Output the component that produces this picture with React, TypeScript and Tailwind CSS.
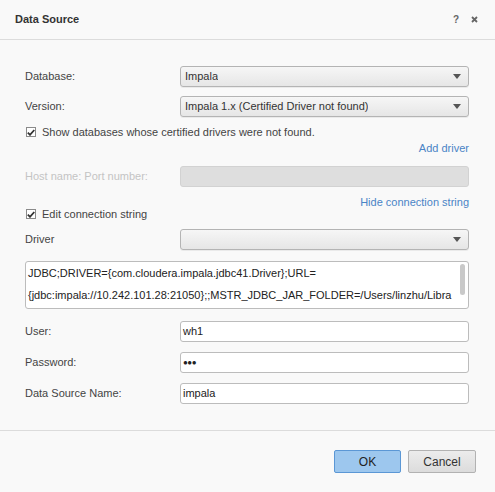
import React from "react";

const FONT = "font-['Liberation_Sans',Arial,sans-serif]";

function Caret() {
  return (
    <svg width="8" height="5" viewBox="0 0 8 5" className="shrink-0">
      <path d="M0 0 H8 L4 5 Z" fill="#555" />
    </svg>
  );
}

function Select({ value }: { value: string }) {
  return (
    <div className="flex-1 h-[21px] flex items-center justify-between pl-[4px] pr-[7px] rounded-[3px] border border-[#b4b4b4] bg-gradient-to-b from-[#f6f6f6] to-[#e6e6e6] text-[#333] shadow-[0_1px_0_rgba(0,0,0,0.06)]">
      <span className="truncate">{value}</span>
      <Caret />
    </div>
  );
}

function TextInput({ value, disabled, small }: { value?: string; disabled?: boolean; small?: boolean }) {
  return (
    <div
      className={
        disabled
          ? "flex-1 h-[21px] rounded-[3px] border border-[#d2d2d2] bg-[#dedede]"
          : `flex-1 h-[21px] flex items-center px-[2px] rounded-[3px] border border-[#bcbcbc] bg-white text-[#222] ${small ? "text-[8px] tracking-[-0.5px]" : ""}`
      }
    >
      {value}
    </div>
  );
}

function Row({
  label,
  muted,
  children,
  className = "",
}: {
  label: string;
  muted?: boolean;
  children: React.ReactNode;
  className?: string;
}) {
  return (
    <div className={`flex items-center ${className}`}>
      <span className={`w-[155px] shrink-0 ${muted ? "text-[#c4c4c4]" : "text-[#444]"}`}>{label}</span>
      {children}
    </div>
  );
}

function Check({ label, className = "" }: { label: string; className?: string }) {
  return (
    <div className={`flex items-center gap-[6px] pl-[1px] ${className}`}>
      <span className="w-[10px] h-[10px] border border-[#8a8a8a] bg-white flex items-center justify-center">
        <svg width="8" height="7" viewBox="0 0 8 7">
          <path d="M0.8 3.6 L3 5.8 L7.3 1" stroke="#333" strokeWidth="1.8" fill="none" />
        </svg>
      </span>
      <span className="text-[#444]">{label}</span>
    </div>
  );
}

export default function App() {
  return (
    <div className={`w-[495px] h-[492px] bg-[#f9f9f9] flex flex-col text-[11px] ${FONT}`}>
      {/* header */}
      <div className="h-[40px] shrink-0 flex items-center justify-between pl-[15px] pr-[17px] border-b border-[#dcdcdc]">
        <span className="font-bold text-[11px] text-[#333]">Data Source</span>
        <div className="flex items-center gap-[12px] text-[#666] font-bold">
          <span className="text-[10px]">?</span>
          <svg width="7" height="7" viewBox="0 0 7 7">
            <path d="M1 1 L6 6 M6 1 L1 6" stroke="#666" strokeWidth="1.8" />
          </svg>
        </div>
      </div>

      {/* form */}
      <div className="flex-1 flex flex-col pl-[25px] pr-[26px] pt-[26px]">
        <Row label="Database:">
          <Select value="Impala" />
        </Row>
        <Row label="Version:" className="mt-[9px]">
          <Select value="Impala 1.x (Certified Driver not found)" />
        </Row>
        <Check label="Show databases whose certified drivers were not found." className="h-[16px] mt-[7px]" />
        <div className="h-[16px] flex items-center justify-end">
          <span className="text-[#4a84c6]">Add driver</span>
        </div>
        <Row label="Host name: Port number:" muted className="mt-[10px]">
          <TextInput disabled />
        </Row>
        <div className="h-[12px] mt-[9px] flex items-center justify-end">
          <span className="text-[#4a84c6]">Hide connection string</span>
        </div>
        <Check label="Edit connection string" className="h-[12px]" />
        <Row label="Driver" className="mt-[9px]">
          <Select value="" />
        </Row>
        <div className="mt-[11px] h-[48px] relative rounded-[3px] border border-[#bcbcbc] bg-white text-[#222] pl-[2px] leading-[22px] overflow-hidden">
          <div className="whitespace-nowrap">JDBC;DRIVER={"{com.cloudera.impala.jdbc41.Driver}"};URL=</div>
          <div className="whitespace-nowrap">{"{jdbc:impala://10.242.101.28:21050}"};;MSTR_JDBC_JAR_FOLDER=/Users/linzhu/Libra</div>
          <span className="absolute right-[3px] top-[2px] w-[5px] h-[31px] rounded-full bg-[#c9c9c9]" />
        </div>
        <Row label="User:" className="mt-[12px]">
          <TextInput value="wh1" />
        </Row>
        <Row label="Password:" className="mt-[10px]">
          <TextInput value="●●●" small />
        </Row>
        <Row label="Data Source Name:" className="mt-[10px]">
          <TextInput value="impala" />
        </Row>
      </div>

      {/* footer */}
      <div className="h-[62px] shrink-0 border-t border-[#dcdcdc] flex items-start justify-end gap-[7px] pt-[19px] pr-[19px]">
        <button className="w-[67px] h-[23px] rounded-[2px] border border-[#5b97d5] bg-[#9dc7ee] text-[#222] text-[12px]">
          OK
        </button>
        <button className="w-[68px] h-[23px] rounded-[2px] border border-[#b2b2b2] bg-gradient-to-b from-[#ececec] to-[#dcdcdc] text-[#333] text-[12px]">
          Cancel
        </button>
      </div>
    </div>
  );
}
